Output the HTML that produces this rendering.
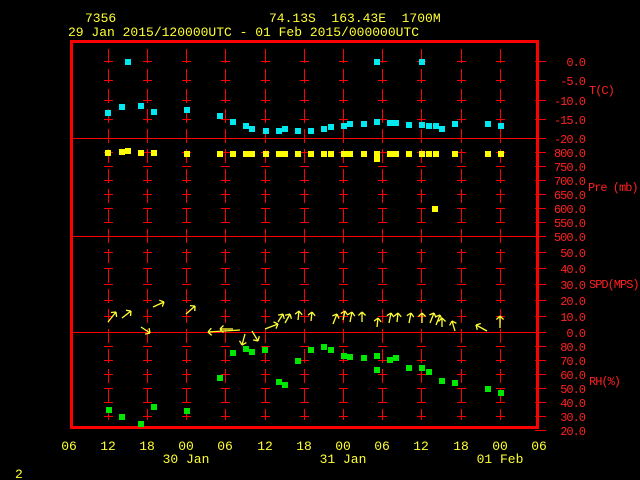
<!DOCTYPE html>
<html><head><style>
html,body{margin:0;padding:0;background:#000;width:640px;height:480px;overflow:hidden}
svg{display:block}
text{font-family:"Liberation Mono","DejaVu Sans Mono",monospace;font-size:13px}
.y{fill:#ffff33}.r{fill:#ff2020}
.r text{font-size:12px;letter-spacing:-1px}
</style></head><body>
<svg id="s" width="640" height="480" xmlns="http://www.w3.org/2000/svg">
<g id="g" shape-rendering="crispEdges"></g>
<text class="y" x="85" y="22">7356</text>
<text class="y" x="269" y="22" xml:space="preserve">74.13S  163.43E  1700M</text>
<text class="y" x="68" y="36">29 Jan 2015/120000UTC - 01 Feb 2015/000000UTC</text>
<g class="r" text-anchor="end">
<text x="585" y="66">0.0</text><text x="585" y="85">-5.0</text><text x="585" y="105">-10.0</text><text x="585" y="124">-15.0</text><text x="585" y="143">-20.0</text>
<text x="585" y="157">800.0</text><text x="585" y="171">750.0</text><text x="585" y="185">700.0</text><text x="585" y="199">650.0</text><text x="585" y="213">600.0</text><text x="585" y="227">550.0</text><text x="585" y="241">500.0</text>
<text x="585" y="257">50.0</text><text x="585" y="273">40.0</text><text x="585" y="289">30.0</text><text x="585" y="305">20.0</text><text x="585" y="321">10.0</text><text x="585" y="337">0.0</text>
<text x="585" y="351">80.0</text><text x="585" y="365">70.0</text><text x="585" y="379">60.0</text><text x="585" y="393">50.0</text><text x="585" y="407">40.0</text><text x="585" y="421">30.0</text><text x="585" y="435">20.0</text>
</g>
<g class="r">
<text x="589" y="94">T(C)</text><text x="588" y="191" xml:space="preserve">Pre (mb)</text><text x="589" y="288">SPD(MPS)</text><text x="589" y="385">RH(%)</text>
</g>
<g class="y" text-anchor="middle">
<text x="69" y="450">06</text><text x="108" y="450">12</text><text x="147" y="450">18</text><text x="186" y="450">00</text><text x="225" y="450">06</text><text x="265" y="450">12</text><text x="304" y="450">18</text><text x="343" y="450">00</text><text x="382" y="450">06</text><text x="421" y="450">12</text><text x="461" y="450">18</text><text x="500" y="450">00</text><text x="539" y="450">06</text>
<text x="186" y="463">30 Jan</text><text x="343" y="463">31 Jan</text><text x="500" y="463">01 Feb</text>
</g>
<text class="y" x="15" y="478">2</text>
<g id="w"></g>
</svg>
<script>
var g=document.getElementById('g'),h='',hw='';
function L(x1,y1,x2,y2,c,w){h+='<line x1="'+x1+'" y1="'+y1+'" x2="'+x2+'" y2="'+y2+'" stroke="'+c+'" stroke-width="'+(w||1)+'"/>';}
function W(x1,y1,x2,y2){hw+='<line x1="'+x1+'" y1="'+y1+'" x2="'+x2+'" y2="'+y2+'" stroke="#ffff33" stroke-width="1.3"/>';}
var R='#ff0000';
var xs=[108,147,186,225,265,304,343,382,421,461,500];
var ticks=[61,80,100,119,152,166,180,194,208,222,252,268,284,300,316,346,360,374,388,402,416];
xs.forEach(function(x){
 h+='<line x1="'+(x+.5)+'" y1="49" x2="'+(x+.5)+'" y2="420" stroke="'+R+'" stroke-dasharray="14 6"/>';
 ticks.forEach(function(t){L(x-4,t+.5,x+5,t+.5,R);});
});
ticks.concat([138,236,332,430]).forEach(function(t){L(535,t+.5,546,t+.5,R);});
L(71,138.5,538,138.5,R);L(71,236.5,538,236.5,R);L(71,332.5,538,332.5,R);
h+='<rect x="71.5" y="41.5" width="466" height="386" fill="none" stroke="'+R+'" stroke-width="3"/>';
function sq(p,c){p.forEach(function(a){h+='<rect x="'+(a[0]-3)+'" y="'+(a[1]-3)+'" width="6" height="6" fill="'+c+'"/>';});}
sq([[108,113],[128,62],[122,107],[141,106],[154,112],[187,110],[220,116],[233,122],[246,126],[252,129],[266,131],[279,131],[285,129],[298,131],[311,131],[324,129],[331,127],[344,126],[350,124],[364,124],[377,62],[377,122],[390,123],[396,123],[409,125],[422,62],[422,125],[429,126],[436,126],[442,129],[455,124],[488,124],[501,126]],'#00e8f0');
sq([[108,153],[122,152],[128,151],[141,153],[154,153],[187,154],[220,154],[233,154],[246,154],[252,154],[266,154],[279,154],[285,154],[298,154],[311,154],[324,154],[331,154],[344,154],[350,154],[364,154],[377,154],[377,159],[390,154],[396,154],[409,154],[422,154],[429,154],[436,154],[455,154],[488,154],[501,154],[435,209]],'#ffff00');
sq([[109,410],[122,417],[141,424],[154,407],[187,411],[220,378],[233,353],[246,349],[252,352],[265,350],[279,382],[285,385],[298,361],[311,350],[324,347],[331,350],[344,356],[350,357],[364,358],[377,356],[377,370],[390,360],[396,358],[409,368],[422,368],[429,372],[442,381],[455,383],[488,389],[501,393]],'#00e800');
var A=[[108,322,116,312],[122,318,131,311],[153,307,164,302],[186,314,195,306],[141,327,150,333],[240,330,208,332],[233,329,220,329],[245,334,242,345],[252,331,258,341],[265,329,278,324],[278,322,283,314],[285,323,290,314],[298,320,299,311],[311,321,312,312],[333,324,337,314],[343,320,345,311],[350,322,352,312],[362,322,362,312],[377,327,378,318],[389,323,391,313],[397,322,398,313],[409,323,411,313],[422,323,422,313],[430,323,434,313],[436,325,440,315],[442,327,442,318],[455,331,452,321],[487,331,476,325],[500,328,500,316]];
A.forEach(function(a){W(a[0],a[1],a[2],a[3]);
 var dx=a[2]-a[0],dy=a[3]-a[1],l=Math.hypot(dx,dy);dx/=l;dy/=l;var s=5;
 [0.5,-0.5].forEach(function(an){var c=Math.cos(Math.PI-an*1.6),sn=Math.sin(Math.PI-an*1.6);
  var ux=dx*c-dy*sn,uy=dx*sn+dy*c;W(a[2],a[3],(a[2]+ux*s).toFixed(1),(a[3]+uy*s).toFixed(1));});
});
g.innerHTML=h;document.getElementById('w').innerHTML=hw;
</script>
</body></html>
